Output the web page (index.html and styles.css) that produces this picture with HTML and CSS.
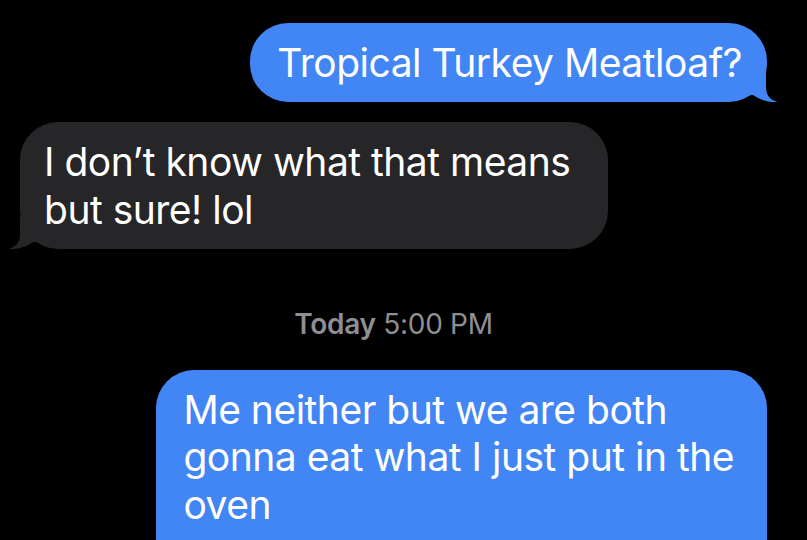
FILE: index.html
```html
<!DOCTYPE html>
<html lang="en">
<head>
<meta charset="utf-8">
<title>Messages</title>
<link rel="stylesheet" href="styles.css">
</head>
<body>
<main class="thread">
  <div class="row row-out">
    <div class="bubble bubble-out first">
      Tropical Turkey Meatloaf?
      <svg class="tail tail-out" viewBox="0 0 30 32" width="30" height="32" aria-hidden="true"><path d="M0 0 H18 V17 C18 25 22 30 29.5 32 C21 32.8 11 29.5 5 25 L0 25 Z"/></svg>
    </div>
  </div>
  <div class="row row-in">
    <div class="bubble bubble-in">
      I don’t know what that means<br>but sure! lol
      <svg class="tail tail-in" viewBox="0 0 30 32" width="30" height="32" aria-hidden="true"><path d="M30 0 H12 V17 C12 25 8 30 0.5 32 C9 32.8 19 29.5 25 25 L30 25 Z"/></svg>
    </div>
  </div>
  <div class="stamp"><span class="stamp-day">Today</span> 5:00 PM</div>
  <div class="row row-out">
    <div class="bubble bubble-out last">
      Me neither but we are both<br>gonna eat what I just put in the<br>oven
      <svg class="tail tail-out" viewBox="0 0 30 32" width="30" height="32" aria-hidden="true"><path d="M0 0 H18 V17 C18 25 22 30 29.5 32 C21 32.8 11 29.5 5 25 L0 25 Z"/></svg>
    </div>
  </div>
</main>
</body>
</html>
```

FILE: styles.css
```css
html, body {
  margin: 0;
  padding: 0;
  background: #000;
  height: 540px;
  overflow: hidden;
}

.thread {
  display: flex;
  flex-direction: column;
  padding: 23px 40px 0 20px;
  font-family: Inter, "Noto Sans", sans-serif;
}

.row {
  display: flex;
}

.row-out {
  justify-content: flex-end;
}

.row-in {
  justify-content: flex-start;
  margin-top: 20px;
}

.bubble {
  position: relative;
  font-size: 39px;
  line-height: 47.5px;
  letter-spacing: -0.5px;
  color: #fff;
  padding: 16px 25px 15.5px 27px;
  border-radius: 38px;
  white-space: nowrap;
}

.bubble-out {
  background: #4285f4;
}

.bubble-out .tail {
  fill: #4285f4;
}

.bubble-in {
  background: #262628;
  padding-left: 24px;
  padding-right: 38px;
}

.bubble-in .tail {
  fill: #262628;
}

.tail {
  position: absolute;
  bottom: 0;
}

.tail-out {
  right: -11px;
}

.tail-in {
  left: -12px;
}

.last {
  padding-bottom: 60px;
  padding-right: 33px;
}

.stamp {
  margin: 60px 0 31px;
  text-align: center;
  color: #8e8e93;
  font-size: 28px;
  line-height: 30px;
  letter-spacing: -0.3px;
}

.stamp-day {
  font-weight: 600;
}
```
